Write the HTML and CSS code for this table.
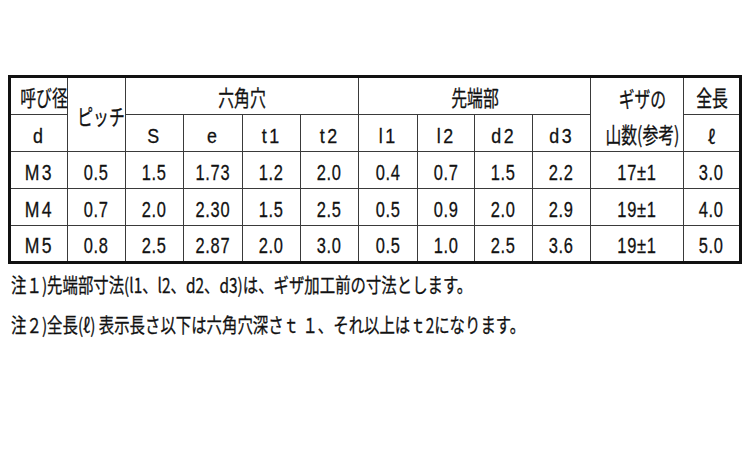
FILE: index.html
```html
<!DOCTYPE html>
<html lang="ja">
<head>
<meta charset="utf-8">
<title>六角穴 寸法表</title>
<link rel="stylesheet" href="styles.css">
</head>
<body>
<div class="page">
  <table class="spec">
    <colgroup>
      <col class="c58"><col class="c58"><col class="c58"><col class="c59">
      <col class="c58"><col class="c58"><col class="c59"><col class="c57">
      <col class="c58"><col class="c58"><col class="c93"><col class="c57">
    </colgroup>
    <tr class="hr1">
      <td><span class="jp">呼び径</span></td>
      <td rowspan="2"><span class="jp">ピッチ</span></td>
      <td colspan="4"><span class="jp">六角穴</span></td>
      <td colspan="4"><span class="jp">先端部</span></td>
      <td rowspan="2" class="two"><span class="jp">ギザの<br>山数(参考)</span></td>
      <td><span class="jp">全長</span></td>
    </tr>
    <tr class="hr2">
      <td><span class="lat">d</span></td>
      <td><span class="lat">S</span></td>
      <td><span class="lat">e</span></td>
      <td><span class="lat">t1</span></td>
      <td><span class="lat">t2</span></td>
      <td><span class="lat">l1</span></td>
      <td><span class="lat">l2</span></td>
      <td><span class="lat">d2</span></td>
      <td><span class="lat">d3</span></td>
      <td><span class="ell">ℓ</span></td>
    </tr>
    <tr class="dr">
      <td><span class="mm">M3</span></td>
      <td><span class="num">0.5</span></td>
      <td><span class="num">1.5</span></td>
      <td><span class="num">1.73</span></td>
      <td><span class="num">1.2</span></td>
      <td><span class="num">2.0</span></td>
      <td><span class="num">0.4</span></td>
      <td><span class="num">0.7</span></td>
      <td><span class="num">1.5</span></td>
      <td><span class="num">2.2</span></td>
      <td><span class="num">17±1</span></td>
      <td><span class="num">3.0</span></td>
    </tr>
    <tr class="dr">
      <td><span class="mm">M4</span></td>
      <td><span class="num">0.7</span></td>
      <td><span class="num">2.0</span></td>
      <td><span class="num">2.30</span></td>
      <td><span class="num">1.5</span></td>
      <td><span class="num">2.5</span></td>
      <td><span class="num">0.5</span></td>
      <td><span class="num">0.9</span></td>
      <td><span class="num">2.0</span></td>
      <td><span class="num">2.9</span></td>
      <td><span class="num">19±1</span></td>
      <td><span class="num">4.0</span></td>
    </tr>
    <tr class="dr">
      <td><span class="mm">M5</span></td>
      <td><span class="num">0.8</span></td>
      <td><span class="num">2.5</span></td>
      <td><span class="num">2.87</span></td>
      <td><span class="num">2.0</span></td>
      <td><span class="num">3.0</span></td>
      <td><span class="num">0.5</span></td>
      <td><span class="num">1.0</span></td>
      <td><span class="num">2.5</span></td>
      <td><span class="num">3.6</span></td>
      <td><span class="num">19±1</span></td>
      <td><span class="num">5.0</span></td>
    </tr>
  </table>
  <div class="notes">
    <p class="note">注１)先端部寸法(l1、l2、d2、d3)は、ギザ加工前の寸法とします。</p>
    <p class="note">注２)全長(ℓ) 表示長さ以下は六角穴深さｔ １、それ以上はｔ2になります。</p>
  </div>
</div>
</body>
</html>
```
FILE: styles.css
```css
html, body {
  margin: 0;
  padding: 0;
  background: #ffffff;
  color: #111111;
}

.page {
  padding: 75px 0 0 8px;
}

.spec {
  border-collapse: collapse;
  table-layout: fixed;
  width: 733px;
  border: 3px solid #111111;
}

.c57 { width: 57px; }
.c58 { width: 58px; }
.c59 { width: 59px; }
.c93 { width: 93px; }

.spec td {
  border: 1px solid #3a3a3a;
  padding: 0;
  text-align: center;
  vertical-align: middle;
  white-space: nowrap;
  overflow: visible;
}

.hr1 { height: 36px; }
.hr2 { height: 37px; }
.dr { height: 37px; }

.hr2 td,
.dr td {
  padding-top: 5px;
}

.hr2 td.two {
  padding-top: 0;
}

.jp {
  display: inline-block;
  font-family: "Noto Sans CJK JP", sans-serif;
  font-size: 22px;
  line-height: 36px;
  -webkit-text-stroke: 0.3px #111111;
  transform: scaleX(0.72);
}

.lat {
  display: inline-block;
  font-family: "Liberation Sans", Arial, sans-serif;
  font-size: 21px;
  line-height: 24px;
  letter-spacing: 3px;
  -webkit-text-stroke: 0.3px #111111;
  transform: scaleX(0.85);
}

.ell {
  display: inline-block;
  font-family: "Noto Sans CJK JP", sans-serif;
  font-size: 19px;
  line-height: 24px;
  -webkit-text-stroke: 0.3px #111111;
  transform: scaleX(0.85);
}

.num {
  display: inline-block;
  font-family: "Liberation Sans", Arial, sans-serif;
  font-size: 22.5px;
  line-height: 24px;
  letter-spacing: 1px;
  -webkit-text-stroke: 0.3px #111111;
  transform: scaleX(0.73);
}

.mm {
  display: inline-block;
  font-family: "Liberation Sans", Arial, sans-serif;
  font-size: 22px;
  line-height: 24px;
  letter-spacing: 3px;
  -webkit-text-stroke: 0.3px #111111;
  transform: scaleX(0.8);
}

.notes {
  padding-top: 1px;
}

.note {
  margin: 0;
  padding-left: 4px;
  font-family: "Noto Sans CJK JP", sans-serif;
  font-size: 20px;
  line-height: 40px;
  white-space: nowrap;
  -webkit-text-stroke: 0.3px #111111;
  transform: scaleX(0.77);
  transform-origin: left center;
}
```
